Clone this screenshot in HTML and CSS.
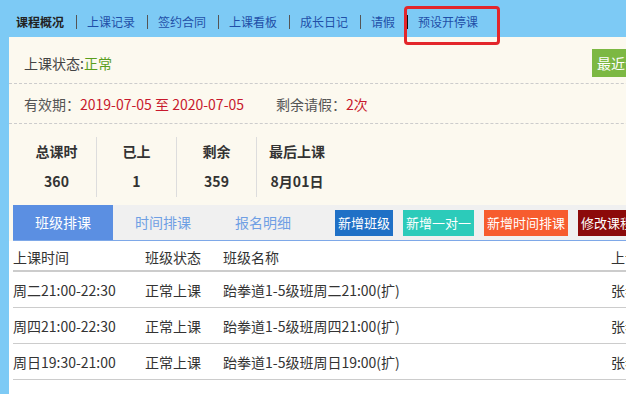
FILE: index.html
```html
<!DOCTYPE html>
<html lang="zh-CN">
<head>
    <meta charset="UTF-8">
    <meta name="viewport" content="width=device-width, initial-scale=1.0">
    <title>课程概况</title>
    <link rel="stylesheet" href="styles.css">
</head>
<body>
    <div class="topbar">
        <a class="nav-item current">课程概况</a>
        <a class="nav-item">上课记录</a>
        <a class="nav-item">签约合同</a>
        <a class="nav-item">上课看板</a>
        <a class="nav-item">成长日记</a>
        <a class="nav-item">请假</a>
        <a class="nav-item marked">预设开停课</a>
    </div>

    <div class="panel">
        <div class="status-row">
            <span>上课状态:<em class="ok">正常</em></span>
            <button class="recent-btn">最近合同</button>
        </div>
        <div class="validity-row">
            有效期：<span class="red">2019-07-05 至 2020-07-05</span>
            <span class="leave">剩余请假：<span class="red">2次</span></span>
        </div>
        <div class="stats">
            <div class="stat">
                <div class="stat-label">总课时</div>
                <div class="stat-value">360</div>
            </div>
            <div class="stat">
                <div class="stat-label">已上</div>
                <div class="stat-value">1</div>
            </div>
            <div class="stat">
                <div class="stat-label">剩余</div>
                <div class="stat-value">359</div>
            </div>
            <div class="stat last">
                <div class="stat-label">最后上课</div>
                <div class="stat-value">8月01日</div>
            </div>
        </div>

        <div class="tab-wrap">
            <div class="tabbar">
                <div class="tab active">班级排课</div>
                <div class="tab">时间排课</div>
                <div class="tab">报名明细</div>
                <div class="actions">
                    <button class="act blue">新增班级</button>
                    <button class="act teal">新增一对一</button>
                    <button class="act orange">新增时间排课</button>
                    <button class="act darkred">修改课程</button>
                </div>
            </div>
        </div>

        <div class="table-wrap">
            <table class="schedule">
                <thead>
                    <tr>
                        <th class="c-time">上课时间</th>
                        <th class="c-state">班级状态</th>
                        <th class="c-name">班级名称</th>
                        <th>上课老师</th>
                    </tr>
                </thead>
                <tbody>
                    <tr>
                        <td>周二21:00-22:30</td>
                        <td>正常上课</td>
                        <td>跆拳道1-5级班周二21:00(扩)</td>
                        <td>张老师</td>
                    </tr>
                    <tr>
                        <td>周四21:00-22:30</td>
                        <td>正常上课</td>
                        <td>跆拳道1-5级班周四21:00(扩)</td>
                        <td>张老师</td>
                    </tr>
                    <tr>
                        <td>周日19:30-21:00</td>
                        <td>正常上课</td>
                        <td>跆拳道1-5级班周日19:00(扩)</td>
                        <td>张老师</td>
                    </tr>
                </tbody>
            </table>
        </div>
    </div>
</body>
</html>
```

FILE: styles.css
```css
body {
    margin: 0;
    background: #7dcaf5;
    font-family: "Noto Sans CJK SC", "Noto Sans", sans-serif;
    color: #444;
    overflow: hidden;
}
.topbar {
    height: 37px;
    box-sizing: border-box;
    padding: 7px 0 0 6px;
    display: flex;
    align-items: center;
}
.nav-item {
    position: relative;
    font-size: 12px;
    line-height: 14px;
    padding: 0 12px 0 10px;
    border-left: 1px solid #555;
    color: #1f4fa8;
    cursor: pointer;
}
.nav-item.current {
    border-left: none;
    color: #222;
    font-weight: bold;
}
.nav-item.marked {
    border-left-color: #111;
}
.nav-item.marked::after {
    content: "";
    position: absolute;
    left: -4px;
    top: -9px;
    width: 90px;
    height: 33px;
    border: 3px solid #e3262b;
    border-radius: 4px;
}
.panel {
    margin-left: 9px;
    width: 680px;
    background: #fcf9ef;
}
.status-row {
    height: 47px;
    box-sizing: border-box;
    padding: 6px 31px 0 15px;
    display: flex;
    align-items: center;
    border-bottom: 1px dashed #ccc;
    font-size: 14px;
}
.ok {
    font-style: normal;
    color: #5a9e1e;
}
.recent-btn {
    margin-left: auto;
    height: 28px;
    padding: 0 5px;
    border: none;
    background: #7cb843;
    color: #fff;
    font-family: inherit;
    font-size: 14px;
}
.validity-row {
    height: 40px;
    box-sizing: border-box;
    padding: 0 15px;
    display: flex;
    align-items: center;
    border-bottom: 1px dashed #ccc;
    font-size: 14px;
    color: #555;
}
.red {
    color: #c8192d;
}
.leave {
    margin-left: 32px;
}
.stats {
    display: flex;
    padding: 13px 0 8px 8px;
}
.stat {
    width: 80px;
    height: 60px;
    box-sizing: border-box;
    padding-top: 4px;
    border-right: 1px solid #ddd;
    text-align: center;
    font-weight: bold;
    font-size: 14px;
    color: #333;
}
.stat.last {
    border-right: none;
}
.stat-label,
.stat-value {
    line-height: 20px;
}
.stat-value {
    margin-top: 10px;
}
.tab-wrap {
    padding-left: 4px;
}
.tabbar {
    display: flex;
    align-items: center;
    height: 36px;
    box-sizing: border-box;
    background: #f0f0f0;
    border-bottom: 1px solid #7ea8e8;
}
.tab {
    width: 100px;
    line-height: 35px;
    text-align: center;
    font-size: 14px;
    color: #6f9fe4;
}
.tab.active {
    background: #5b8fe2;
    color: #fff;
}
.actions {
    display: flex;
    gap: 10px;
    margin-left: 22px;
}
.act {
    height: 26px;
    padding: 0 3px;
    border: none;
    color: #fff;
    font-family: inherit;
    font-size: 13px;
    white-space: nowrap;
}
.act.blue { background: #1f70c6; }
.act.teal { background: #2ccbba; }
.act.orange { background: #f75c2e; }
.act.darkred { background: #8c0a0a; }
.table-wrap {
    background: #fff;
    padding-left: 4px;
    height: 200px;
}
.schedule {
    width: 700px;
    border-collapse: collapse;
    font-size: 14px;
    color: #333;
}
.schedule th {
    font-weight: normal;
    text-align: left;
    height: 26px;
    padding: 3px 0 0 0;
    border-bottom: 2px solid #ccc;
    white-space: nowrap;
}
.schedule td {
    height: 35px;
    padding: 0;
    border-bottom: 1px solid #ccc;
    white-space: nowrap;
}
.c-time { width: 132px; }
.c-state { width: 78px; }
.c-name { width: 388px; }
```
